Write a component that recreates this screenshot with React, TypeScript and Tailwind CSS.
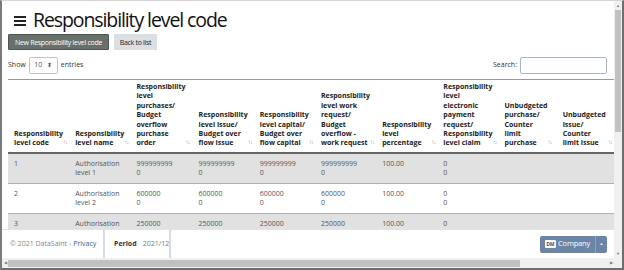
const headers = [
  ["Responsibility", "level code"],
  ["Responsibility", "level name"],
  ["Responsibility", "level", "purchases/", "Budget", "overflow", "purchase", "order"],
  ["Responsibility", "level issue/", "Budget over", "flow issue"],
  ["Responsibility", "level capital/", "Budget over", "flow capital"],
  ["Responsibility", "level work", "request/", "Budget", "overflow -", "work request"],
  ["Responsibility", "level", "percentage"],
  ["Responsibility", "level", "electronic", "payment", "request/", "Responsibility", "level claim"],
  ["Unbudgeted", "purchase/", "Counter", "limit", "purchase"],
  ["Unbudgeted", "issue/", "Counter", "limit issue"],
];

const widths = ["w-[61px]", "w-[61px]", "w-[62px]", "w-[61px]", "w-[61px]", "w-[61px]", "w-[61px]", "w-[61px]", "w-[58px]", "w-[61px]"];

const rows = [
  { code: "1", name: ["Authorisation", "level 1"], amt: "999999999" },
  { code: "2", name: ["Authorisation", "level 2"], amt: "600000" },
  { code: "3", name: ["Authorisation", "level 3"], amt: "250000" },
];

function SortIcon() {
  return <span className="text-[6px] font-normal text-gray-400 tracking-[-1px] mr-[4px]">↑↓</span>;
}

export default function App() {
  return (
    <div
      className="w-[624px] h-[270px] flex flex-col bg-white border-l-2 border-l-[#7a7a7a] border-t border-t-[#d4d4d4] border-r-2 border-r-[#6e6e6e] border-b-2 border-b-[#6e6e6e] overflow-hidden text-[#333]"
      style={{ fontFamily: '"Open Sans", "Noto Sans", sans-serif' }}
    >
      <div className="flex flex-1 min-h-0">
        <div className="flex-1 min-w-0 flex flex-col">
          <div className="flex-1 min-h-0 overflow-hidden px-[6px]">
            <div className="flex items-center gap-[7px] pt-[7px] pl-[6px]">
              <svg width="12" height="11" viewBox="0 0 12 11">
                <rect x="0" y="1" width="12" height="2" fill="#222" />
                <rect x="0" y="5" width="12" height="2" fill="#222" />
                <rect x="0" y="9" width="12" height="2" fill="#222" />
              </svg>
              <h1 className="text-[19.5px] leading-[24px] font-medium text-[#111] tracking-[-1.1px]">
                Responsibility level code
              </h1>
            </div>
            <div className="flex gap-[5px] mt-[2px]">
              <button className="h-[16px] w-[101px] bg-[#67706b] border border-[#4d5550] text-white text-[7px] leading-none rounded-[1px] tracking-[-0.3px] whitespace-nowrap">
                New Responsibility level code
              </button>
              <button className="h-[16px] w-[43px] bg-[#dcdfe2] text-[#222] text-[7px] leading-none rounded-[1px] tracking-[-0.3px] whitespace-nowrap">
                Back to list
              </button>
            </div>
            <div className="flex items-center justify-between mt-[7px] h-[17px]">
              <div className="flex items-center gap-[3px] text-[7px] text-[#333]">
                <span>Show</span>
                <div className="w-[29px] h-[17px] border border-[#c4c4c4] rounded-[2px] flex items-center justify-center gap-[5px] text-[7px] text-[#555]">
                  <span>10</span>
                  <span className="text-[6px]">⬍</span>
                </div>
                <span>entries</span>
              </div>
              <div className="flex items-center gap-[3px] text-[7px]">
                <span>Search:</span>
                <div className="w-[87px] h-[17px] border border-[#aab4c8] rounded-[2px] mr-[1px]" />
              </div>
            </div>
            <table className="mt-[5px] w-[640px] border-collapse table-fixed text-[7px] leading-[9.4px] border-t border-t-[#999]">
              <thead>
                <tr className="border-b-2 border-b-[#666]">
                  {headers.map((h, i) => (
                    <th key={i} className={`${widths[i]} align-bottom text-left font-bold text-[#222] pl-[6px] pr-[2px] pt-[2px] pb-[4px]`}>
                      <div className="flex items-end justify-between">
                        <div>
                          {h.map((l) => (
                            <div key={l}>{l}</div>
                          ))}
                        </div>
                        <SortIcon />
                      </div>
                    </th>
                  ))}
                  <th className="w-[30px]" />
                </tr>
              </thead>
              <tbody>
                {rows.map((r, i) => (
                  <tr key={r.code} className={`border-b border-b-[#b0b0b0] ${i % 2 === 0 ? "bg-[#e1e1e1]" : "bg-white"}`}>
                    <td className="align-top pl-[6px] pt-[5px] pb-[6px] text-[#555] leading-[9px]">{r.code}</td>
                    <td className="align-top pl-[6px] pt-[5px] pb-[6px] text-[#555] leading-[9px]">
                      {r.name.map((l) => (
                        <div key={l}>{l}</div>
                      ))}
                    </td>
                    {[0, 1, 2, 3].map((k) => (
                      <td key={k} className="align-top pl-[6px] pt-[5px] pb-[6px] text-[#555] leading-[9px]">
                        <div>{r.amt}</div>
                        <div>0</div>
                      </td>
                    ))}
                    <td className="align-top pl-[6px] pt-[5px] pb-[6px] text-[#555] leading-[9px]">100.00</td>
                    <td className="align-top pl-[6px] pt-[5px] pb-[6px] text-[#555] leading-[9px]">
                      <div>0</div>
                      <div>0</div>
                    </td>
                    <td />
                    <td />
                    <td />
                  </tr>
                ))}
              </tbody>
            </table>
          </div>
          <footer className="h-[29px] shrink-0 flex items-center border-t border-t-[#e4e4e4] bg-white text-[7px] whitespace-nowrap">
            <div className="h-full flex items-center gap-[2px] pl-[8px] w-[103px] border-r-2 border-r-[#d6dde6] text-[#888]">
              <span>© 2021 DataSaint -</span>
              <span className="text-[#2f5fa8]">Privacy</span>
            </div>
            <div className="h-full flex items-center gap-[6px] pl-[9px] w-[66px] border-r-2 border-r-[#d6dde6]">
              <span className="font-bold text-[#333]">Period</span>
              <span className="text-[#777]">2021/12</span>
            </div>
            <div className="flex-1" />
            <div className="flex h-[17px] mr-[7px] rounded-[2px] bg-[#6c84a6] text-white overflow-hidden">
              <div className="flex items-center gap-[2px] pl-[5px] pr-[5px]">
                <span className="bg-white text-[#3a4f70] text-[5px] font-bold leading-none px-[1.5px] py-[1.5px] rounded-[1px]">DM</span>
                <span className="text-[7.5px] tracking-[-0.2px]">Company</span>
              </div>
              <div className="w-[12px] flex items-center justify-center border-l border-l-[#8ea0bb] text-[4px]">▲</div>
            </div>
          </footer>
        </div>
        <div className="w-[8px] shrink-0 bg-[#f0f0f0] flex flex-col items-center">
          <div className="h-[9px] flex items-center text-[4px] text-[#777]">▲</div>
          <div className="w-[6px] h-[122px] bg-[#c1c1c1]" />
          <div className="flex-1" />
          <div className="h-[9px] flex items-center text-[4px] text-[#777]">▼</div>
        </div>
      </div>
      <div className="h-[10px] shrink-0 flex items-center bg-[#f0f0f0] pr-[8px]">
        <div className="w-[6px] text-[4px] text-[#777] text-center">◀</div>
        <div className="w-[512px] h-[7px] bg-[#c1c1c1]" />
        <div className="flex-1" />
        <div className="w-[6px] text-[4px] text-[#777] text-center">▶</div>
      </div>
    </div>
  );
}
